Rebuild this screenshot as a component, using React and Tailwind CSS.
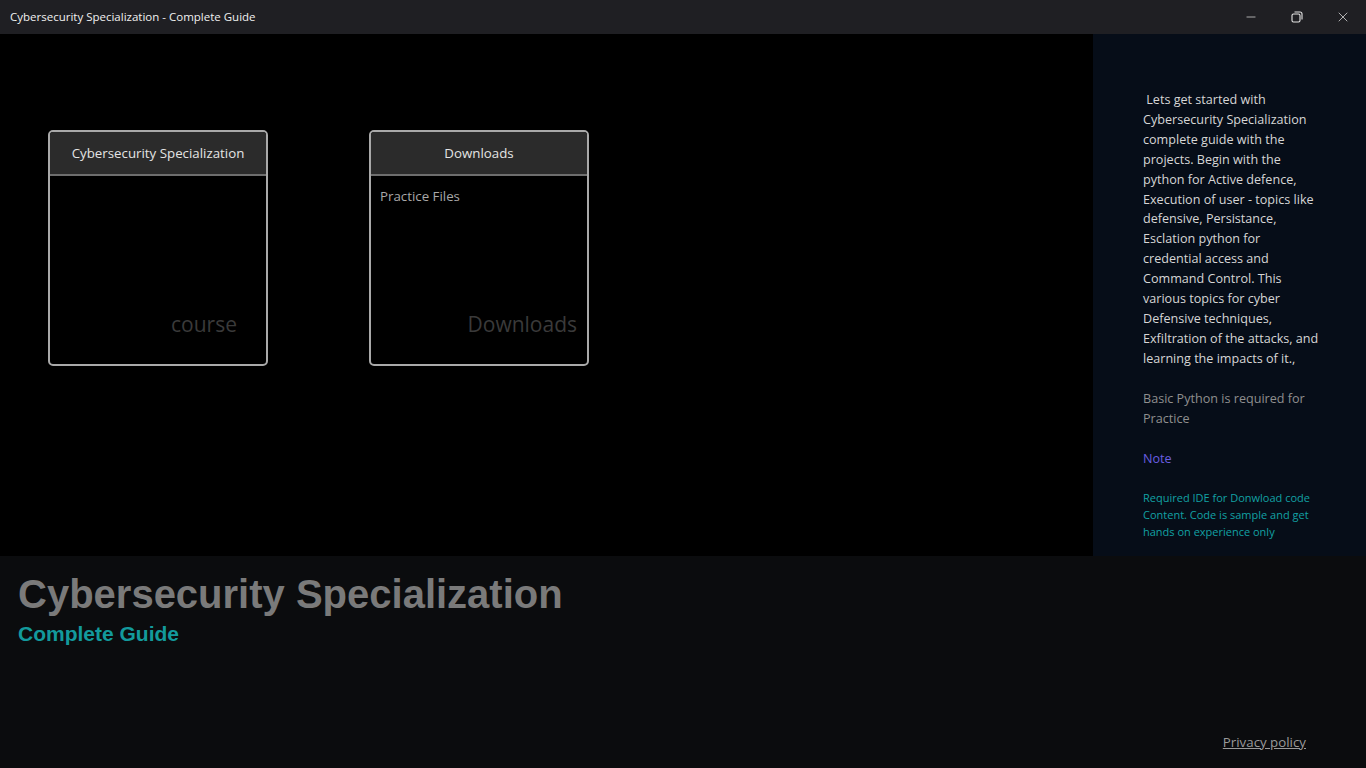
import { Minus, X } from "lucide-react"

const seg = { fontFamily: '"Open Sans", "Noto Sans", "Liberation Sans", sans-serif' }
const gothic = { fontFamily: '"Liberation Sans", "DejaVu Sans", sans-serif' }

const intro = [
  "\u00a0Lets get started with",
  "Cybersecurity Specialization",
  "complete guide with the",
  "projects. Begin with the",
  "python for Active defence,",
  "Execution of user - topics like",
  "defensive, Persistance,",
  "Esclation python for",
  "credential access and",
  "Command Control. This",
  "various topics for cyber",
  "Defensive techniques,",
  "Exfiltration of the attacks, and",
  "learning the impacts of it.,",
]

const Tile = ({ title, children, watermark, wmClass }) => (
  <div className="w-[220px] h-[236px] rounded-[5px] border-2 border-[#a9a9a9] bg-black flex flex-col overflow-hidden">
    <div className="h-[44px] pt-[2px] bg-[#2b2b2b] border-b-2 border-[#6e6e6e] flex items-center justify-center text-[13.3px] text-[#e4e4e4]">
      {title}
    </div>
    <div className="flex-1 flex flex-col px-[9px] pt-[11px] pb-[24px]">
      <div className="text-[13.3px] text-[#a8a8a8]">{children}</div>
      <div className={"mt-auto text-right text-[#3a3a3a] " + wmClass}>{watermark}</div>
    </div>
  </div>
)

export default function App() {
  return (
    <div className="w-[1366px] h-[768px] flex flex-col bg-black overflow-hidden" style={seg}>
      {/* title bar */}
      <div className="h-[34px] bg-[#1f1f23] flex items-center justify-between pl-[10px] shrink-0">
        <span className="text-[11.5px] text-[#f0f0f0]">Cybersecurity Specialization - Complete Guide</span>
        <div className="flex h-full text-[#e6e6e6]">
          <div className="w-[46px] flex items-center justify-center">
            <Minus className="w-[14px] h-[14px]" strokeWidth={1.2} />
          </div>
          <div className="w-[46px] flex items-center justify-center">
            <svg width="12" height="12" viewBox="0 0 12 12" fill="none" stroke="currentColor" strokeWidth="1.1">
              <rect x="1" y="3" width="8" height="8" rx="1.5" />
              <path d="M3.5 1h5.5a2 2 0 0 1 2 2v5.5" />
            </svg>
          </div>
          <div className="w-[46px] flex items-center justify-center">
            <X className="w-[16px] h-[16px]" strokeWidth={1.1} />
          </div>
        </div>
      </div>

      {/* main */}
      <div className="h-[522px] flex shrink-0">
        <div className="flex-1 bg-black flex items-start gap-[101px] pl-[48px] pt-[96px]">
          <Tile title="Cybersecurity Specialization" watermark="course" wmClass="text-[21px] pr-[20px]">
            &nbsp;
          </Tile>
          <Tile title="Downloads" watermark="Downloads" wmClass="text-[21px] pr-[1px]">
            Practice Files
          </Tile>
        </div>
        <div className="w-[273px] bg-[#060d18] pl-[50px] pr-[20px] pt-[56px]">
          <p className="text-[12.6px] leading-[19.9px] text-[#d6d6d6] whitespace-nowrap">
            {intro.map((line, i) => (
              <span key={i} className="block">{line}</span>
            ))}
          </p>
          <p className="mt-[20px] text-[12.6px] leading-[19.9px] text-[#8f8f8f]">
            Basic Python is required for<br />Practice
          </p>
          <p className="mt-[20px] text-[12.6px] leading-[20px] text-[#6a5ee0]">Note</p>
          <p className="mt-[20px] text-[11px] leading-[17px] text-[#12a1a4]">
            Required IDE for Donwload code<br />Content. Code is sample and get<br />hands on experience only
          </p>
        </div>
      </div>

      {/* bottom */}
      <div className="flex-1 bg-[#0b0c0e] flex flex-col px-[18px] pt-[15px]">
        <h1 className="text-[40px] leading-[46px] font-bold text-[#7a7a7a]" style={gothic}>
          Cybersecurity Specialization
        </h1>
        <h2 className="mt-[4px] text-[21px] leading-[26px] font-bold text-[#139a9c]" style={gothic}>
          Complete Guide
        </h2>
        <div className="mt-auto mb-[15px] self-end pr-[42px]">
          <a className="text-[13.3px] text-[#9a9a9a] underline">Privacy policy</a>
        </div>
      </div>
    </div>
  )
}
